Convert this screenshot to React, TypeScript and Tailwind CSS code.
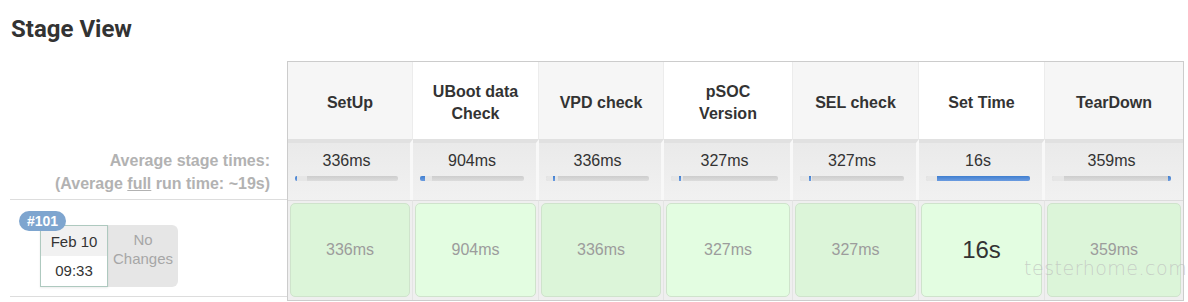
import React from 'react';

type Stage = {
  name: string[];
  width: string;
  avg: string;
  bar: [number, number];
  run: string;
  shade: boolean;
  big?: boolean;
};

const stages: Stage[] = [
  { name: ['SetUp'], width: 'w-[125px]', avg: '336ms', bar: [0, 1.5], run: '336ms', shade: true },
  { name: ['UBoot data', 'Check'], width: 'w-[126px]', avg: '904ms', bar: [0, 5], run: '904ms', shade: false },
  { name: ['VPD check'], width: 'w-[125px]', avg: '336ms', bar: [6.5, 1.5], run: '336ms', shade: true },
  { name: ['pSOC', 'Version'], width: 'w-[129px]', avg: '327ms', bar: [7.5, 1.2], run: '327ms', shade: false },
  { name: ['SEL check'], width: 'w-[126px]', avg: '327ms', bar: [9, 1.2], run: '327ms', shade: true },
  { name: ['Set Time'], width: 'w-[126px]', avg: '16s', bar: [11, 89], run: '16s', shade: false, big: true },
  { name: ['TearDown'], width: 'w-[138px]', avg: '359ms', bar: [97.5, 2.5], run: '359ms', shade: true },
];

function StageColumn({ stage, last }: { stage: Stage; last: boolean }) {
  return (
    <div className={`${stage.width} shrink-0 flex flex-col`}>
      {/* header */}
      <div
        className={`h-[77px] pt-[4px] flex flex-col items-center justify-center text-[16px] leading-[22px] font-bold text-[#333] text-center ${
          stage.shade ? 'bg-[#f6f6f6]' : 'bg-white'
        } ${last ? '' : 'border-r border-[#ececec]'}`}
      >
        {stage.name.map((n) => (
          <div key={n}>{n}</div>
        ))}
      </div>

      {/* average */}
      <div
        className={`h-[61px] border-t-4 border-[#e1e1e1] bg-gradient-to-b from-[#eaeaea] to-[#f1f1f1] pt-[8px] pl-[7px] pr-[12px] ${
          last ? '' : 'border-r-[3px] border-r-[#f8f8f8]'
        }`}
      >
        <div className="text-center text-[16px] leading-[20px] text-[#333]">{stage.avg}</div>
        <div className="relative mt-[5px] h-[5px] rounded-[2px] bg-gradient-to-b from-[#cdcdcd] to-[#dcdcdc] overflow-hidden">
          <div className="absolute left-0 top-0 h-full w-[12px] bg-[#e6e6e6]" />
          <div
            className="absolute top-0 h-full bg-gradient-to-b from-[#3f7fd0] to-[#6b9be0]"
            style={{ left: `${stage.bar[0]}%`, width: `${stage.bar[1]}%`, minWidth: 2 }}
          />
        </div>
      </div>

      {/* build run */}
      <div
        className={`h-[100px] border-t border-[#dcdcdc] bg-[#efefef] pt-[2px] pb-[3px] px-[2px] ${
          last ? '' : 'border-r border-r-[#e4e4e4]'
        }`}
      >
        <div
          className={`h-full rounded-[5px] border border-[#cfe3cc] flex items-center justify-center ${
            stage.shade ? 'bg-[#dcf5d9]' : 'bg-[#e3fde1]'
          } ${stage.big ? 'text-[24px] text-[#333]' : 'text-[16px] text-[#9c9c9c]'}`}
        >
          {stage.run}
        </div>
      </div>
    </div>
  );
}

export default function App() {
  return (
    <div className="relative w-[1188px] h-[302px] bg-white overflow-hidden font-['Liberation_Sans',Arial,sans-serif]">
      <div className="h-[61px] pl-[11px] pt-[15px] text-[24px] leading-[28px] font-bold text-[#333] font-['Roboto',sans-serif]">
        Stage View
      </div>

      <div className="flex">
        {/* left labels */}
        <div className="w-[277px] ml-[10px] shrink-0 flex flex-col">
          <div className="h-[78px]" />
          <div className="h-[61px] border-b border-[#dddddd] pt-[10px] pr-[17px] text-right text-[16px] leading-[23px] font-bold text-[#b2b2b2]">
            <div>Average stage times:</div>
            <div>
              (Average <span className="underline">full</span> run time: ~19s)
            </div>
          </div>
          <div className="relative h-[97px] border-b border-[#dddddd] pt-[25px] pl-[30px]">
            <div className="flex">
              <div className="w-[68px] h-[62px] border border-[#aec9bf] flex flex-col text-[15px] text-[#333] shadow-[0_1px_2px_rgba(0,0,0,0.08)] bg-white z-0">
                <div className="h-[30px] bg-[#f1f1f1] flex items-end justify-center pb-[3px]">Feb 10</div>
                <div className="flex-1 flex items-center justify-center">09:33</div>
              </div>
              <div className="w-[70px] h-[62px] bg-[#e6e6e6] rounded-r-[6px] flex flex-col items-center pt-[5px] text-[15px] leading-[19px] text-[#a6a6a6]">
                <div>No</div>
                <div>Changes</div>
              </div>
            </div>
            <div className="absolute left-[9px] top-[11px] h-[20px] px-[8px] rounded-full bg-[#7ea5cf] text-white text-[14px] font-bold leading-[20px]">
              #101
            </div>
          </div>
        </div>

        {/* stage table */}
        <div className="flex border border-[#cccccc] shrink-0">
          {stages.map((s, i) => (
            <StageColumn key={s.name.join(' ')} stage={s} last={i === stages.length - 1} />
          ))}
        </div>
      </div>

      {/* watermark overlay */}
      <div className="pointer-events-none absolute left-[1024px] top-[257px] text-[19px] leading-[22px] font-light tracking-[0.5px] text-[#bdbdbd]/70 font-['DejaVu_Sans',sans-serif]">
        testerhome.com
      </div>
    </div>
  );
}
